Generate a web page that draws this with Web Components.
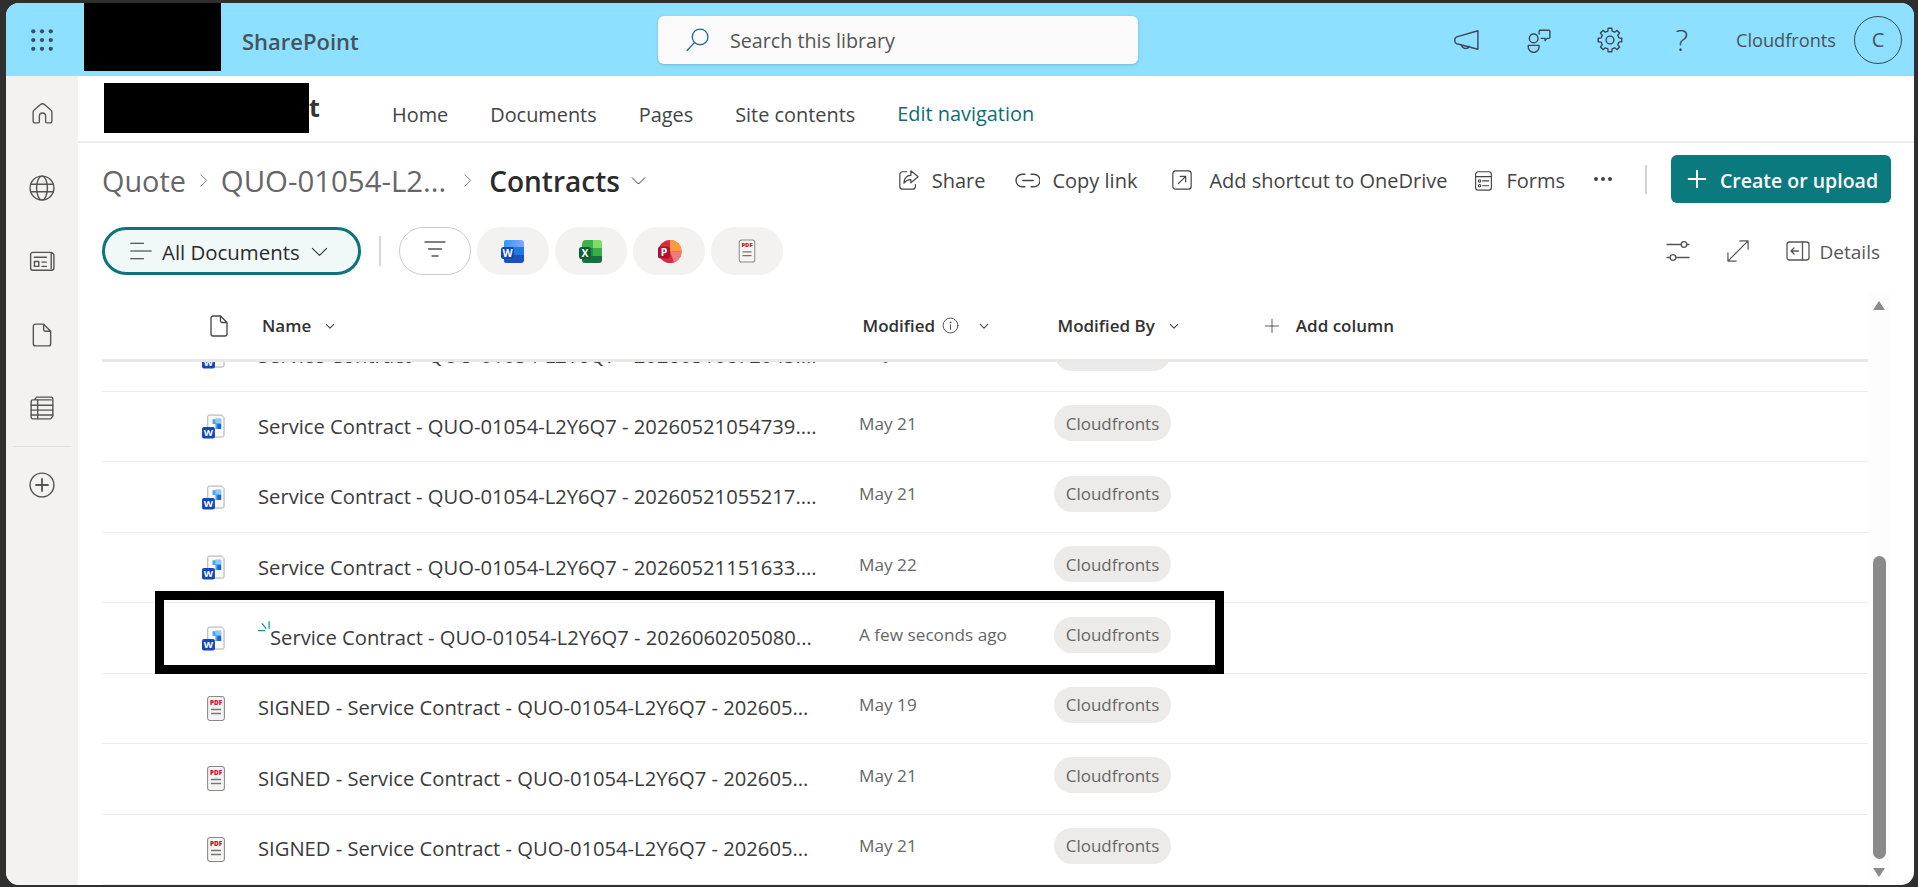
<!DOCTYPE html>
<html lang="en">
<head>
<meta charset="utf-8">
<title>Contracts</title>
<style>
  html, body { margin: 0; height: 100%; background: #2f2f2f; overflow: hidden; }
  body { font-family: "Open Sans", "Noto Sans", sans-serif; }
</style>
</head>
<body>
<sp-shell>
  <sp-suitebar slot="top"></sp-suitebar>
  <sp-rail slot="rail"></sp-rail>
  <sp-sitenav></sp-sitenav>
  <sp-commandbar></sp-commandbar>
  <sp-viewbar></sp-viewbar>
  <sp-list>
    <sp-row type="word" date="May 21" first>Service Contract - QUO-01054-L2Y6Q7 - 20260510672045....</sp-row>
    <sp-row type="word" date="May 21">Service Contract - QUO-01054-L2Y6Q7 - 20260521054739....</sp-row>
    <sp-row type="word" date="May 21">Service Contract - QUO-01054-L2Y6Q7 - 20260521055217....</sp-row>
    <sp-row type="word" date="May 22">Service Contract - QUO-01054-L2Y6Q7 - 20260521151633....</sp-row>
    <sp-row type="word" date="A few seconds ago" busy marked>Service Contract - QUO-01054-L2Y6Q7 - 2026060205080...</sp-row>
    <sp-row type="pdf" date="May 19">SIGNED - Service Contract - QUO-01054-L2Y6Q7 - 202605...</sp-row>
    <sp-row type="pdf" date="May 21">SIGNED - Service Contract - QUO-01054-L2Y6Q7 - 202605...</sp-row>
    <sp-row type="pdf" date="May 21">SIGNED - Service Contract - QUO-01054-L2Y6Q7 - 202605...</sp-row>
  </sp-list>
</sp-shell>

<script>
const line = 'fill="none" stroke="currentColor" stroke-width="1.3" stroke-linecap="round" stroke-linejoin="round"';

function gearPath() {
    let d = "";
    for (let i = 0; i < 8; i++) {
        const a = i * Math.PI / 4;
        const pts = [[-0.24, 8.4], [-0.15, 11], [0.15, 11], [0.24, 8.4]];
        for (const [o, r] of pts) {
            d += (d ? "L" : "M") + (12 + r * Math.sin(a + o)).toFixed(2) + " " + (12 - r * Math.cos(a + o)).toFixed(2);
        }
    }
    return d + "Z";
}

const ICONS = {
    waffle: `<g fill="currentColor">${[5, 12, 19].map(y => [5, 12, 19].map(x => `<circle cx="${x}" cy="${y}" r="1.7"/>`).join("")).join("")}</g>`,
    search: `<g ${line}><circle cx="14.5" cy="9.5" r="7.5"/><path d="M9 15L2 22.5"/></g>`,
    megaphone: `<g ${line}><path d="M23 3.5v17L3.5 15.5c-1.2-.4-1.8-1.2-1.8-2.4v-1.6c0-1.1.6-2 1.8-2.4z"/><path d="M8 17c.3 2.4 3.6 3.4 5.2 2.6 1-.4 1.4-1 1.6-1.8"/></g>`,
    people: `<g ${line}><circle cx="8" cy="10.5" r="4"/><path d="M3 17h10v1.500a5 5 0 0 1-10 0z"/><path d="M14 3h8a1 1 0 0 1 1 1v5.500a1 1 0 0 1-1 1h-1.500l-2 2v-2H15"/><path d="M14 3a1 1 0 0 0-1 1v2.500"/></g>`,
    gear: `<g ${line}><path d="${gearPath()}"/><circle cx="12" cy="12" r="3.6"/></g>`,
    home: `<path ${line} d="M9.8 3.6a3.3 3.3 0 0 1 4.4 0l6 5.2c.5.4.8 1 .8 1.7v8.7c0 1-.8 1.8-1.8 1.8H16c-.5 0-1-.4-1-1v-5.500c0-1.700-1.300-3-3-3s-3 1.300-3 3V20c0 .6-.5 1-1 1H4.800c-1 0-1.800-.8-1.800-1.800v-8.700c0-.7.3-1.300.8-1.700z"/>`,
    globe: `<g ${line}><circle cx="12" cy="12" r="11"/><ellipse cx="12" cy="12" rx="5" ry="11"/><path d="M2 8.500h20M2 15.500h20"/></g>`,
    news: `<g ${line}><path d="M19.500 4H3.500a2 2 0 0 0-2 2v12.500a2 2 0 0 0 2 2H21a2 2 0 0 0 2-2V7c0-1.500-1-2.500-2.500-3v15"/><path d="M5 8.500h11M12 13h4M12 17h4"/><rect x="5" y="12.500" width="4" height="4.500"/></g>`,
    doc: `<path ${line} d="M6 2h7.500L20 8.500V20a2 2 0 0 1-2 2H6a2 2 0 0 1-2-2V4a2 2 0 0 1 2-2zM13.500 2v5A1.500 1.500 0 0 0 15 8.500h5"/>`,
    table: `<g ${line}><path d="M5 4.500 7 2h13.500A1.500 1.500 0 0 1 22 3.500v16L20 22H3.500A1.500 1.500 0 0 1 2 20.500V6a1.500 1.500 0 0 1 1.500-1.500h17"/><path d="M2 9.500h20M2 14h20M2 18.500h20M8 4.500V22"/></g>`,
    plusCircle: `<g ${line}><circle cx="12" cy="12" r="11"/><path d="M12 6.500v11M6.500 12h11" stroke-width="1.700"/></g>`,
    share: `<g ${line}><path d="M9.500 3H5a3 3 0 0 0-3 3v13a3 3 0 0 0 3 3h11a3 3 0 0 0 3-3v-2"/><path d="M14 2l8 6.500L14 15v-3.500c-3.500 0-5.500 1-7.500 4 0-5 2.500-8.500 7.500-8.500z"/></g>`,
    link: `<g ${line}><path d="M9.500 6H7a6 6 0 0 0 0 12h2.500M15.500 6H18a6 6 0 0 1 0 12h-2.500M7.500 12h10"/></g>`,
    shortcut: `<g ${line}><rect x="2" y="2" width="20" height="20" rx="3"/><path d="M8 16l8-8M10 8h6v6"/></g>`,
    forms: `<g ${line}><rect x="3" y="2" width="18" height="21" rx="3"/><path d="M3 7.500h18M11 12.500h7M11 18h7"/><circle cx="7.500" cy="12.500" r="1.400"/><circle cx="7.500" cy="18" r="1.400"/></g>`,
    lines: `<g ${line}><path d="M2 3h15M2 12h24M2 21h15"/></g>`,
    filter: `<g ${line}><path d="M2 3h20M5.500 10h13M9 17h6"/></g>`,
    chevDown: `<path ${line} d="M3 8l9 9 9-9"/>`,
    chevSmall: `<path fill="none" stroke="currentColor" stroke-width="2.600" stroke-linecap="round" stroke-linejoin="round" d="M3 8l9 9 9-9"/>`,
    chevRight: `<path ${line} d="M8 3l9 9-9 9"/>`,
    sliders: `<g ${line}><path d="M1 5.500h14M20.500 5.500H23M1 18.500h3M9.500 18.500H23"/><circle cx="18" cy="5.500" r="2.800"/><circle cx="7" cy="18.500" r="2.800"/></g>`,
    expand: `<g ${line}><path d="M23 1 1 23M14 1h9v9M1 14v9h9"/></g>`,
    details: `<g ${line}><rect x="1" y="3" width="22" height="18" rx="2.500"/><path d="M16.500 3v18M12.500 12H5M8 9l-3 3 3 3"/></g>`,
    info: `<g ${line}><circle cx="12" cy="12" r="10.500"/><path d="M12 11v6.500"/><circle cx="12" cy="7.500" r=".6"/></g>`,
    plus: `<g ${line}><path d="M12 2v20M2 12h20"/></g>`,
    plusBold: `<path fill="none" stroke="currentColor" stroke-width="2.400" stroke-linecap="round" d="M12 2v20M2 12h20"/>`,
    spinner: `<g fill="none" stroke="#1f8f8f" stroke-width="1.100" stroke-linecap="round"><path d="M.6 8.500H6M3.600 2.300 7 6.500M9.700 .6V6.500"/></g>`,
    wordPill: `<defs><linearGradient id="a" x1="0" x2="1"><stop offset="0" stop-color="#2a9df4"/><stop offset="1" stop-color="#8ea3ff"/></linearGradient></defs><path d="M5 1h15a3 3 0 0 1 3 3v4H3V3a2 2 0 0 1 2-2z" fill="url(#a)"/><rect x="3" y="8" width="20" height="9" fill="#1f7ae0"/><path d="M3 16h20v5a3 3 0 0 1-3 3H5a2 2 0 0 1-2-2z" fill="#1c4fc4"/><rect x="0" y="8" width="13" height="12" rx="2.500" fill="#1446b4"/><text x="6.500" y="17.500" font-size="10.500" font-weight="700" fill="#fff" text-anchor="middle" font-family="Open Sans">W</text>`,
    excelPill: `<path d="M7 1h7v8H3V5a4 4 0 0 1 4-4z" fill="#3fb24f"/><path d="M14 1h6a3 3 0 0 1 3 3v5h-9z" fill="#7fdc63"/><rect x="3" y="9" width="11" height="8" fill="#1f9148"/><rect x="14" y="9" width="9" height="8" fill="#3bae4a"/><path d="M3 17h20v4a3 3 0 0 1-3 3H6a3 3 0 0 1-3-3z" fill="#14703c"/><rect x="0" y="8" width="12" height="12" rx="2.500" fill="#0f5e34"/><text x="6" y="17.500" font-size="10.500" font-weight="700" fill="#fff" text-anchor="middle" font-family="Open Sans">X</text>`,
    pptPill: `<circle cx="13" cy="12.500" r="11.500" fill="#d92b3f"/><path d="M13 1a11.500 11.500 0 0 1 11.500 11.500H13z" fill="#ff9a3d"/><path d="M13 12.500h11.500A11.500 11.500 0 0 1 17 23.300z" fill="#f4787f"/><rect x="1" y="7.500" width="12" height="12" rx="2.500" fill="#b0102f"/><text x="7" y="17" font-size="10.500" font-weight="700" fill="#fff" text-anchor="middle" font-family="Open Sans">P</text>`,
    pdf: `<rect x="4.600" y="1" width="16.800" height="24" rx="2.600" fill="#f6f5f4" stroke="#8a8a8a" stroke-width="1.100"/><text x="13" y="9.200" font-size="6.400" font-weight="800" fill="#c4121f" text-anchor="middle" font-family="Open Sans">PDF</text><path d="M8 14h10M8 18h10" stroke="#777" stroke-width="1.300"/>`,
    wordFile: `<path d="M7.500 .6H20.500L23 3.100V22a1.500 1.500 0 0 1-1.500 1.500H7.500A1.500 1.500 0 0 1 6 22V2.100A1.500 1.500 0 0 1 7.500 .6z" fill="#fbfbfb" stroke="#a8a8a8"/><path d="M11 5h9v10h-6v-5h-3z" fill="#4aa3f2"/><path d="M14 4h6v5h-6z" fill="#8fc8ff"/><rect x="16" y="10" width="4" height="5" fill="#1f62d0"/><rect x="0" y="13" width="13.500" height="12" rx="2" fill="#1547b8"/><text x="6.700" y="22.500" font-size="10" font-weight="700" fill="#fff" text-anchor="middle" font-family="Open Sans">W</text>`,
};

function svg(name, w, h = w, box = "0 0 24 24") {
    return `<svg width="${w}" height="${h}" viewBox="${box}" style="display:block;flex:none">${ICONS[name]}</svg>`;
}

class SpShell extends HTMLElement {
    connectedCallback() {
        this.attachShadow({ mode: "open" }).innerHTML = `
      <style>
        :host { display: block; box-sizing: border-box; width: 100vw; height: 100vh; padding: 3px 4px 2px 6px; }
        #win {
          display: grid; grid-template-columns: 72px 1fr; grid-template-rows: 73px 1fr;
          height: 100%; background: #fff; border-radius: 13px; overflow: hidden;
        }
        #top { grid-column: 1 / 3; }
        #main { display: flex; flex-direction: column; min-width: 0; min-height: 0; }
      </style>
      <div id="win">
        <div id="top"><slot name="top"></slot></div>
        <slot name="rail"></slot>
        <div id="main"><slot></slot></div>
      </div>`;
    }
}

class SpSuitebar extends HTMLElement {
    connectedCallback() {
        this.attachShadow({ mode: "open" }).innerHTML = `
      <style>
        :host { display: flex; align-items: center; height: 73px; background: #8de0ff; color: #3d4750; }
        #waffle { width: 72px; margin-right: 6px; display: flex; justify-content: center; color: #39505f; }
        #redact { width: 137px; height: 68px; background: #000; align-self: flex-start; }
        #brand { margin-left: 21px; width: 416px; font-size: 22px; font-weight: 600; color: #47535c; margin-top: 3px; }
        #search {
          width: 480px; height: 48px; box-sizing: border-box; padding-left: 27px;
          display: flex; align-items: center; gap: 20px; background: #fafafa; border-radius: 6px;
          box-shadow: 0 1px 3px rgba(0,0,0,.18); color: #555; font-size: 19.7px;
        }
        #search svg { color: #2566a8; }
        #search span { padding-top: 2px; }
        #right { margin-left: auto; display: flex; align-items: center; margin-right: 12px; }
        .ic { width: 72px; display: flex; justify-content: center; color: #3c4750; }
        #help { font-size: 30px; font-weight: 300; line-height: 1; color: #3c4750; }
        #name { font-size: 18.2px; color: #47535c; margin-left: 18px; padding-top: 1px; }
        #avatar {
          width: 46px; height: 46px; margin-left: 18px; border: 1px solid #3c4750; border-radius: 50%;
          display: flex; align-items: center; justify-content: center; font-size: 20px; color: #47535c;
        }
      </style>
      <div id="waffle">${svg("waffle", 30)}</div>
      <div id="redact"></div>
      <div id="brand">SharePoint</div>
      <div id="search">${svg("search", 25)}<span>Search this library</span></div>
      <div id="right">
        <div class="ic">${svg("megaphone", 26)}</div>
        <div class="ic">${svg("people", 26)}</div>
        <div class="ic">${svg("gear", 26)}</div>
        <div class="ic"><span id="help">?</span></div>
        <div id="name">Cloudfronts</div>
        <div id="avatar">C</div>
      </div>`;
    }
}

class SpRail extends HTMLElement {
    connectedCallback() {
        this.attachShadow({ mode: "open" }).innerHTML = `
      <style>
        :host { display: flex; flex-direction: column; align-items: center; background: #f3f2f1; color: #555; padding-top: 25px; box-sizing: border-box; height: 100%; }
        .i { height: 74px; display: flex; align-items: flex-start; justify-content: center; }
        hr { width: 58px; border: 0; border-top: 1px solid #e3e2e1; margin: -1px 0 25px; }
      </style>
      <div class="i">${svg("home", 25)}</div>
      <div class="i" style="height:73px">${svg("globe", 26)}</div>
      <div class="i" style="height:74px">${svg("news", 26)}</div>
      <div class="i" style="height:73px">${svg("doc", 26)}</div>
      <div class="i" style="height:52px">${svg("table", 26)}</div>
      <hr>
      <div class="i">${svg("plusCircle", 26)}</div>`;
    }
}

class SpSitenav extends HTMLElement {
    connectedCallback() {
        this.attachShadow({ mode: "open" }).innerHTML = `
      <style>
        :host { display: flex; align-items: center; flex: none; height: 67px; box-sizing: border-box; border-bottom: 2px solid #ececec; padding-left: 26px; font-size: 19.9px; color: #444; }
        #redact { width: 205px; height: 50px; background: #000; margin-top: -2px; }
        b { font-size: 25px; color: #333; width: 83px; margin-top: -4px; }
        nav { display: flex; gap: 42px; margin-top: 12px; }
        a { color: #0f6c70; margin-top: -1px; }
      </style>
      <div id="redact"></div><b>t</b>
      <nav><span>Home</span><span>Documents</span><span>Pages</span><span>Site contents</span><a>Edit navigation</a></nav>`;
    }
}

class SpCommandbar extends HTMLElement {
    connectedCallback() {
        this.attachShadow({ mode: "open" }).innerHTML = `
      <style>
        :host { display: flex; align-items: center; flex: none; height: 48px; margin-top: 12px; padding: 0 23px 0 24px; color: #666; }
        #crumb { display: flex; align-items: center; font-size: 28.8px; padding-top: 3px; }
        #crumb svg { color: #666; }
        #crumb b { color: #2b2b2b; font-weight: 600; font-size: 28px; }
        #crumb span.c svg { color: #2b2b2b; }
        .chev { display: flex; justify-content: center; }
        #right { margin-left: auto; display: flex; align-items: center; color: #444; font-size: 20px; }
        .a { display: flex; align-items: center; gap: 12px; margin-right: 30px; padding-top: 2px; }
        #dots { display: flex; gap: 3px; margin-right: 33px; }
        #dots i { width: 4px; height: 4px; border-radius: 50%; background: #444; }
        #sep { width: 2px; height: 29px; background: #d4d4d4; margin-right: 24px; }
        #create {
          display: flex; align-items: center; gap: 13px; width: 220px; height: 48px; box-sizing: border-box; padding-left: 16px;
          background: #0a7a7e; border-radius: 6px; color: #fff; font-weight: 600; font-size: 19.5px;
        }
        #create span { padding-top: 2px; }
      </style>
      <div id="crumb">
        <span>Quote</span><span class="chev" style="width:35px">${svg("chevRight", 15)}</span>
        <span style="font-size:29.4px">QUO-01054-L2...</span><span class="chev" style="width:43px">${svg("chevRight", 15)}</span>
        <b>Contracts</b><span class="c" style="margin-left:10px">${svg("chevDown", 17)}</span>
      </div>
      <div id="right">
        <div class="a">${svg("share", 22)}<span>Share</span></div>
        <div class="a" style="margin-right:34px">${svg("link", 25)}<span>Copy link</span></div>
        <div class="a" style="gap:16px;margin-right:26px">${svg("shortcut", 22)}<span>Add shortcut to OneDrive</span></div>
        <div class="a" style="margin-right:29px">${svg("forms", 21)}<span>Forms</span></div>
        <div id="dots"><i></i><i></i><i></i></div>
        <div id="sep"></div>
        <div id="create">${svg("plusBold", 20)}<span>Create or upload</span></div>
      </div>`;
    }
}

class SpViewbar extends HTMLElement {
    connectedCallback() {
        this.attachShadow({ mode: "open" }).innerHTML = `
      <style>
        :host { display: flex; align-items: center; flex: none; height: 48px; margin-top: 24px; padding: 0 34px 0 24px; color: #444; }
        #view {
          display: flex; align-items: center; width: 259px; height: 48px; box-sizing: border-box; padding-left: 24px;
          border: 3px solid #0f7478; border-radius: 24px; background: #f0f8f8; color: #2b2b2b; font-size: 20.4px; font-weight: 500;
        }
        #view span { margin: 0 10px 0 9px; padding-top: 1px; }
        #sep { width: 2px; height: 30px; background: #d8d8d8; margin: 0 18px 0 18px; }
        .p { width: 72px; height: 48px; box-sizing: border-box; border-radius: 24px; background: #f3f2f1; display: flex; align-items: center; justify-content: center; margin-right: 6px; }
        .p.o { background: #fff; border: 1px solid #ccc; color: #555; }
        #right { margin-left: auto; display: flex; align-items: center; color: #555; font-size: 19px; }
        #right svg { margin-right: 37px; }
        #right .d svg { margin-right: 10px; }
        .d { display: flex; align-items: center; }
        .d span { padding-top: 2px; }
      </style>
      <div id="view">${svg("lines", 24, 24, "0 0 28 24")}<span>All Documents</span>${svg("chevDown", 19)}</div>
      <div id="sep"></div>
      <div class="p o">${svg("filter", 24)}</div>
      <div class="p">${svg("wordPill", 24, 25, "0 0 24 25")}</div>
      <div class="p">${svg("excelPill", 24, 25, "0 0 24 25")}</div>
      <div class="p">${svg("pptPill", 25, 25, "0 0 25 25")}</div>
      <div class="p">${svg("pdf", 24, 26, "0 0 26 26")}</div>
      <div id="right">
        ${svg("sliders", 24)}${svg("expand", 22)}
        <div class="d">${svg("details", 24)}<span>Details</span></div>
      </div>`;
    }
}

class SpList extends HTMLElement {
    connectedCallback() {
        this.attachShadow({ mode: "open" }).innerHTML = `
      <style>
        :host { display: flex; flex: 1; min-height: 0; margin-top: 17px; padding-left: 24px; padding-right: 24px; }
        #col { flex: 1; min-width: 0; display: flex; flex-direction: column; }
        #head {
          display: grid; grid-template-columns: 158px 601px 195px 1fr; align-items: center; flex: none; height: 67px;
          border-bottom: 3px solid #e8e8e8; font-size: 17px; font-weight: 600; color: #323130;
        }
        #head > div { display: flex; align-items: center; }
        #head svg { color: #444; }
        #by { display: flex; align-items: center; gap: 14px; }
        #add { display: flex; align-items: center; gap: 16px; margin-left: 85px; }
        #rows { flex: 1; min-height: 0; overflow: hidden; }
        #bar { width: 22px; flex: none; margin-bottom: 5px; background: #fdfdfd; display: flex; flex-direction: column; align-items: center; box-sizing: border-box; padding: 9px 0 3px; }
        .up, .down { width: 0; height: 0; border-left: 6px solid transparent; border-right: 6px solid transparent; }
        .up { border-bottom: 9px solid #8a8a8a; }
        .down { border-top: 9px solid #8a8a8a; margin-top: 9px; }
        #track { flex: 1; width: 13px; display: flex; flex-direction: column; justify-content: flex-end; }
        #thumb { height: 303px; background: #8a8a8a; border-radius: 7px; }
      </style>
      <div id="col">
        <div id="head">
          <div style="padding-left:105px">${svg("doc", 24)}</div>
          <div style="gap:14px;padding-left:2px"><span>Name</span>${svg("chevSmall", 10)}</div>
          <div style="padding-left:1.500px"><span>Modified</span><span style="margin:0 20px 0 7px">${svg("info", 17)}</span>${svg("chevSmall", 10)}</div>
          <div style="padding-left:1.500px"><span id="by"><span>Modified By</span>${svg("chevSmall", 10)}</span><span id="add">${svg("plus", 16)}<span>Add column</span></span></div>
        </div>
        <div id="rows"><slot></slot></div>
      </div>
      <div id="bar"><div class="up"></div><div id="track"><div id="thumb"></div></div><div class="down"></div></div>`;
    }
}

class SpRow extends HTMLElement {
    connectedCallback() {
        const pdf = this.getAttribute("type") === "pdf";
        const icon = pdf
            ? `<span style="display:block;margin-left:5px">${svg("pdf", 18, 25, "4 .5 18 25")}</span>`
            : svg("wordFile", 23, 25, "0 0 24 25");
        this.attachShadow({ mode: "open" }).innerHTML = `
      <style>
        :host {
          display: grid; grid-template-columns: 100px 56px 601px 195px 1fr; align-items: center; position: relative;
          height: 70.43px; box-sizing: border-box; border-bottom: 1px solid #efefef; color: #3b3b3b; font-size: 20.2px;
        }
        :host([first]) { margin-top: -40.4px; }
        #ic { grid-column: 2; }
        #name { display: flex; align-items: center; white-space: nowrap; padding-bottom: 2px; }
        #busy { margin: -21px 0 0 0; }
        #date { color: #666; font-size: 17.2px; padding-bottom: 7px; }
        #chip {
          justify-self: start; width: 117px; height: 36px; margin-bottom: 7px; border-radius: 18px; background: #edebe9;
          display: flex; align-items: center; justify-content: center; color: #666; font-size: 17px;
        }
        #mark { position: absolute; z-index: 1; left: 53px; top: -12px; width: 1069px; height: 83px; box-sizing: border-box; border: 9px solid #000; }
      </style>
      <div id="ic">${icon}</div>
      <div id="name">${this.hasAttribute("busy") ? `<span id="busy">${svg("spinner", 12, 12, "0 0 10.5 10.5")}</span>` : ""}<span><slot></slot></span></div>
      <div id="date">${this.getAttribute("date")}</div>
      <div><div id="chip">Cloudfronts</div></div>
      ${this.hasAttribute("marked") ? `<div id="mark"></div>` : ""}`;
    }
}

customElements.define("sp-shell", SpShell);
customElements.define("sp-suitebar", SpSuitebar);
customElements.define("sp-rail", SpRail);
customElements.define("sp-sitenav", SpSitenav);
customElements.define("sp-commandbar", SpCommandbar);
customElements.define("sp-viewbar", SpViewbar);
customElements.define("sp-list", SpList);
customElements.define("sp-row", SpRow);
</script>
</body>
</html>
